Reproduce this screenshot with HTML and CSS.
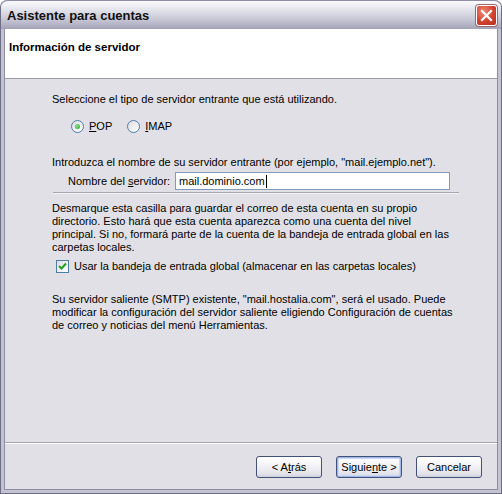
FILE: index.html
```html
<!DOCTYPE html>
<html lang="es">
<head>
  <meta charset="UTF-8">
  <title>Asistente para cuentas</title>
  <link rel="stylesheet" href="styles.css">
</head>
<body>

  <div class="window">
    <div class="titlebar">
      <span class="title">Asistente para cuentas</span>
      <span class="close-btn">
        <svg width="13" height="13" viewBox="0 0 13 13">
          <path d="M2 2 L11 11 M11 2 L2 11" stroke="#fff" stroke-width="2.2" stroke-linecap="square"/>
        </svg>
      </span>
    </div>

    <div class="client">
      <div class="header">
        <h2>Información de servidor</h2>
      </div>

      <div class="content">
        <p class="intro">Seleccione el tipo de servidor entrante que está utilizando.</p>

        <div class="radios">
          <label class="radio-item"><span class="radio checked"></span><span><u>P</u>OP</span></label>
          <label class="radio-item"><span class="radio"></span><span><u>I</u>MAP</span></label>
        </div>

        <p class="server-hint">Introduzca el nombre de su servidor entrante (por ejemplo, "mail.ejemplo.net").</p>

        <div class="server-row">
          <span class="server-label">Nombre del <u>s</u>ervidor:</span>
          <span class="text-input">mail.dominio.com<span class="caret"></span></span>
        </div>

        <div class="rule"></div>

        <p class="desc">Desmarque esta casilla para guardar el correo de esta cuenta en su propio directorio. Esto hará que esta cuenta aparezca como una cuenta del nivel principal. Si no, formará parte de la cuenta de la bandeja de entrada global en las carpetas locales.</p>

        <label class="check-row">
          <span class="checkbox">
            <svg width="9" height="9" viewBox="0 0 9 9">
              <path d="M1 4 L3.5 6.5 L8 1.5" fill="none" stroke="#21a121" stroke-width="2"/>
            </svg>
          </span>
          <span>Usar la bandeja de entrada global (almacenar en las carpetas locales)</span>
        </label>

        <p class="smtp">Su servidor saliente (SMTP) existente, "mail.hostalia.com", será el usado. Puede modificar la configuración del servidor saliente eligiendo Configuración de cuentas de correo y noticias del menú Herramientas.</p>
      </div>

      <div class="footer">
        <button class="btn">&lt; A<u>t</u>rás</button>
        <button class="btn default">Siguie<u>n</u>te &gt;</button>
        <button class="btn">Cancelar</button>
      </div>
    </div>
  </div>

</body>
</html>
```

FILE: styles.css
```css
body {
  margin: 0;
  background: #fff;
  font-family: "Liberation Sans", Arial, sans-serif;
  font-size: 11px;
  color: #000;
}

.window {
  width: 502px;
  height: 494px;
  box-sizing: border-box;
  display: flex;
  flex-direction: column;
  background: #c4c3d2;
  border: 1px solid #6e6e84;
  border-top: none;
  border-radius: 7px 7px 0 0;
}

.titlebar {
  height: 29px;
  flex: none;
  display: flex;
  align-items: center;
  justify-content: space-between;
  padding: 0 4px 0 6px;
  border-top: 1px solid #8e8ea6;
  border-radius: 7px 7px 0 0;
  background: linear-gradient(#fbfbfd 0%, #e8e8ef 25%, #d0d0dc 55%, #b4b4c6 85%, #a2a2b6 100%);
  box-sizing: border-box;
}

.title {
  font-family: "Liberation Sans", Arial, sans-serif;
  font-weight: bold;
  font-size: 13px;
  color: #111;
  margin-top: 1px;
}

.close-btn {
  width: 21px;
  height: 21px;
  box-sizing: border-box;
  display: flex;
  align-items: center;
  justify-content: center;
  border: 1px solid #fff;
  border-radius: 3px;
  background: radial-gradient(circle at 35% 30%, #f08a7a, #d2412c 55%, #b4301e);
  box-shadow: 0 0 0 1px #9a6a70;
  margin-top: 1px;
}

.client {
  flex: 1;
  display: flex;
  flex-direction: column;
  margin: 0 3px 3px;
  background: #e1e0e6;
  border: 1px solid #8d8da4;
  border-top: none;
}

.header {
  height: 50px;
  flex: none;
  background: #fff;
  border-bottom: 1px solid #9d9da8;
  padding: 12px 0 0 4px;
  box-sizing: border-box;
}

.header h2 {
  margin: 0;
  font-size: 11.5px;
  font-weight: bold;
  line-height: 13px;
}

.content {
  flex: 1;
  display: flex;
  flex-direction: column;
  padding: 14px 42px 0 47px;
  line-height: 13px;
}

.content p {
  margin: 0;
}

.radios {
  display: flex;
  gap: 15px;
  margin: 14px 0 0 19px;
}

.radio-item,
.check-row {
  display: flex;
  align-items: center;
  gap: 5px;
}

.radio {
  width: 11px;
  height: 11px;
  border: 1px solid #4f7da4;
  border-radius: 50%;
  background: linear-gradient(135deg, #dcdce4, #fff);
  position: relative;
}

.radio.checked::after {
  content: "";
  position: absolute;
  left: 3px;
  top: 3px;
  width: 5px;
  height: 5px;
  border-radius: 50%;
  background: radial-gradient(circle at 40% 40%, #8ee08a, #21a121);
}

.server-hint {
  margin-top: 23px !important;
}

.server-row {
  display: flex;
  align-items: center;
  margin-top: 3px;
  padding-left: 16px;
}

.server-label {
  width: 107px;
}

.text-input {
  width: 275px;
  height: 18px;
  box-sizing: border-box;
  border: 1px solid #7f9db9;
  background: #fff;
  padding: 2px 3px;
  display: flex;
  align-items: center;
}

.caret {
  width: 1px;
  height: 13px;
  background: #000;
  margin-left: 1px;
}

.rule {
  height: 1px;
  background: #a5a5ad;
  border-bottom: 1px solid #f6f6f8;
  margin: 2px 0 0 1px;
  width: 406px;
}

.desc {
  margin-top: 8px !important;
}

.check-row {
  margin: 6px 0 0 4px;
}

.checkbox {
  width: 11px;
  height: 11px;
  border: 1px solid #4f7da4;
  background: linear-gradient(135deg, #dcdce4, #fff);
  display: flex;
  align-items: center;
  justify-content: center;
}

.smtp {
  margin-top: 20px !important;
}

.footer {
  flex: none;
  height: 47px;
  box-sizing: border-box;
  border-top: 1px solid #a5a5ad;
  box-shadow: inset 0 1px 0 #fff;
  display: flex;
  justify-content: flex-end;
  gap: 14px;
  padding: 13px 15px 0 0;
}

.btn {
  width: 66px;
  height: 22px;
  font-family: "Liberation Sans", Arial, sans-serif;
  font-size: 11px;
  color: #000;
  border: 1px solid #42507a;
  border-radius: 3px;
  background: linear-gradient(#ffffff 0%, #f4f4f8 40%, #e2e2ea 85%, #cfcfda 100%);
  padding: 0;
}

.btn.default {
  box-shadow: inset 0 0 0 1px #9fb8e8, inset 0 0 0 2px #c8d8f6;
}
```
